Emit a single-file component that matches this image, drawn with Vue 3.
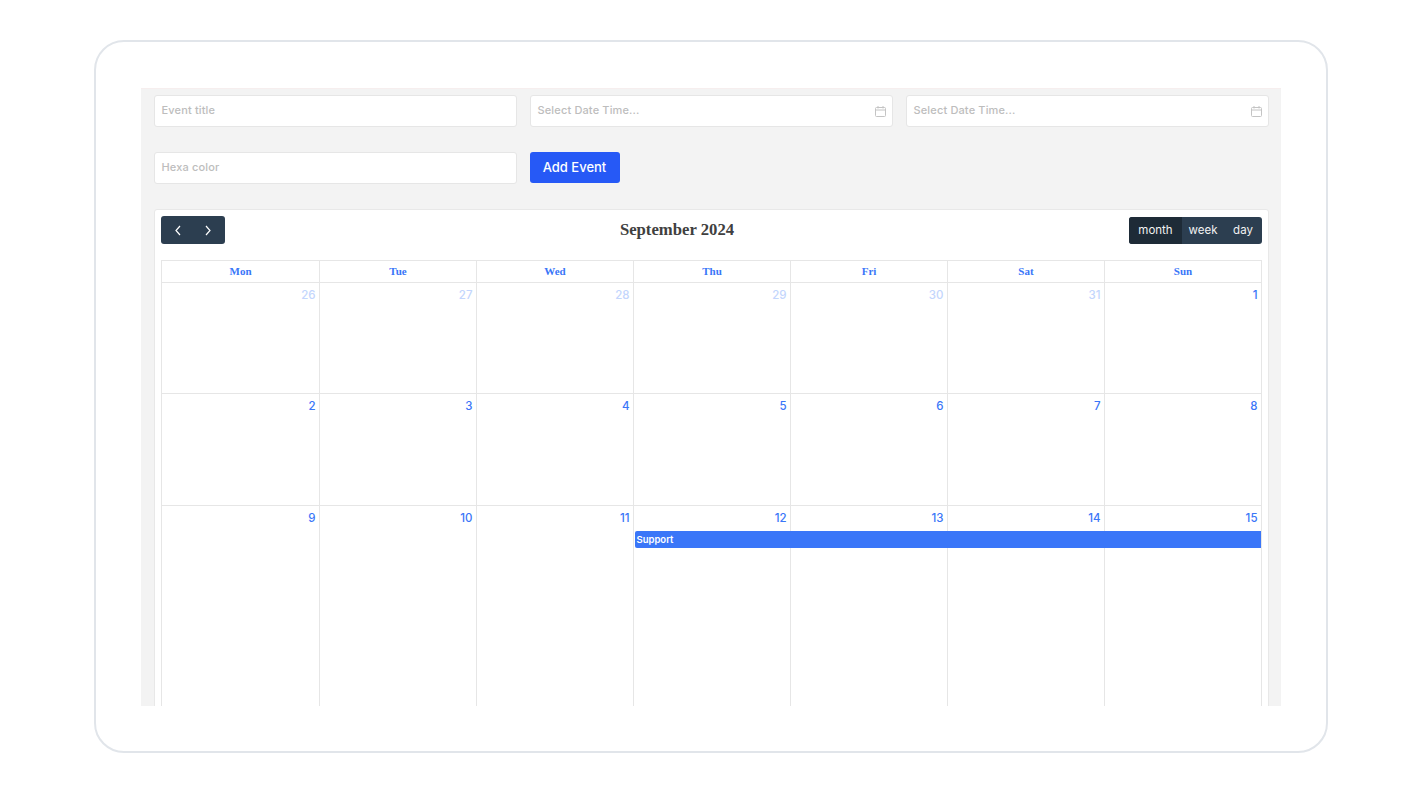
<template>
  <div class="page">
    <div class="frame">
      <div class="panel">
        <div class="fields">
          <div class="field"><span class="ph">Event title</span></div>
          <div class="field">
            <span class="ph">Select Date Time...</span>
            <svg class="cal-icon" width="11" height="11" viewBox="0 0 11 11" fill="none" stroke="#c4c4c4" stroke-width="1">
              <rect x="0.5" y="1.5" width="10" height="9" rx="1" />
              <path d="M0.5 4h10M3 0v2.5M8 0v2.5" />
            </svg>
          </div>
          <div class="field">
            <span class="ph">Select Date Time...</span>
            <svg class="cal-icon" width="11" height="11" viewBox="0 0 11 11" fill="none" stroke="#c4c4c4" stroke-width="1">
              <rect x="0.5" y="1.5" width="10" height="9" rx="1" />
              <path d="M0.5 4h10M3 0v2.5M8 0v2.5" />
            </svg>
          </div>
          <div class="field"><span class="ph">Hexa color</span></div>
          <div class="add-cell"><button class="add-btn">Add Event</button></div>
        </div>

        <div class="card">
          <div class="toolbar">
            <div class="nav">
              <button class="nav-btn">
                <svg width="8" height="11" viewBox="0 0 8 11" fill="none" stroke="#fff" stroke-width="1.2"><path d="M6 1L2 5.5L6 10" /></svg>
              </button>
              <button class="nav-btn">
                <svg width="8" height="11" viewBox="0 0 8 11" fill="none" stroke="#fff" stroke-width="1.2"><path d="M2 1L6 5.5L2 10" /></svg>
              </button>
            </div>
            <h2 class="title">September 2024</h2>
            <div class="views">
              <button class="view active">month</button>
              <button class="view week-btn">week</button>
              <button class="view">day</button>
            </div>
          </div>

          <div class="cal">
            <div class="head">
              <div v-for="d in days" :key="d" class="head-cell">{{ d }}</div>
            </div>
            <div v-for="(week, i) in weeks" :key="i" class="week">
              <div v-for="c in week" :key="c.n" class="day" :class="{ muted: c.muted }">{{ c.n }}</div>
              <div v-if="i === 2" class="event">Support</div>
            </div>
          </div>
        </div>
      </div>
    </div>
  </div>
</template>

<script setup>
const days = ['Mon', 'Tue', 'Wed', 'Thu', 'Fri', 'Sat', 'Sun']

const weeks = [
  [26, 27, 28, 29, 30, 31].map(n => ({ n, muted: true })).concat({ n: 1, muted: false }),
  [2, 3, 4, 5, 6, 7, 8].map(n => ({ n, muted: false })),
  [9, 10, 11, 12, 13, 14, 15].map(n => ({ n, muted: false })),
]
</script>

<style>
html, body {
  background: #fff;
  overflow: hidden;
}
</style>

<style scoped>
.page {
  height: 793px;
  padding: 40px 94px;
  box-sizing: border-box;
  font-family: Inter, "Open Sans", sans-serif;
}
.frame {
  height: 713px;
  box-sizing: border-box;
  border: 2px solid #e1e5ea;
  border-radius: 30px;
  padding: 46px 45px 45px 45px;
}
.panel {
  height: 618px;
  box-sizing: border-box;
  overflow: hidden;
  background: #f3f3f3;
  border-top: 1px solid #f6eeee;
  padding: 6px 12.5px 0 12.5px;
}
.fields {
  display: grid;
  grid-template-columns: repeat(3, 1fr);
  column-gap: 13px;
  row-gap: 25px;
  margin-bottom: 25px;
}
.field {
  height: 32px;
  box-sizing: border-box;
  background: #fff;
  border: 1px solid #e6e6e6;
  border-radius: 3px;
  padding: 0 6px 2px 7px;
  display: flex;
  align-items: center;
  justify-content: space-between;
}
.ph {
  font-size: 11px;
  font-weight: 500;
  letter-spacing: 0.15px;
  color: #bdbdbd;
}
.cal-icon {
  margin-top: 2px;
}
.add-btn {
  display: block;
  width: 90px;
  height: 31px;
  border: none;
  border-radius: 3px;
  background: #2659f6;
  color: #fff;
  font-family: inherit;
  font-size: 13px;
  font-weight: 500;
  padding: 0 0 2px;
}
.card {
  height: 520px;
  box-sizing: border-box;
  background: #fff;
  border: 1px solid #e8e8e8;
  border-radius: 3px 3px 0 0;
  padding: 6px 5.5px 0 6.5px;
}
.toolbar {
  display: flex;
  justify-content: space-between;
  align-items: center;
  height: 28px;
  margin-bottom: 16px;
}
.nav {
  display: flex;
  gap: 1px;
  width: 64px;
  height: 28px;
  padding: 0 2px;
  box-sizing: border-box;
  background: #2c3e50;
  border-radius: 3px;
}
.nav-btn {
  width: 30px;
  border: none;
  background: none;
  padding: 0;
  display: flex;
  align-items: center;
  justify-content: center;
}
.title {
  margin: 0;
  font-family: "Liberation Serif", serif;
  font-size: 16.7px;
  font-weight: 700;
  color: #404040;
}
.views {
  display: flex;
  height: 27px;
  border-radius: 3px;
  overflow: hidden;
  background: #2c3e50;
}
.view {
  border: none;
  background: none;
  color: #f2f2f2;
  font-family: inherit;
  font-size: 11.5px;
  padding: 0;
  width: 38px;
}
.view.week-btn {
  width: 42px;
}
.view.active {
  width: 53px;
  background: #1e2b37;
}
.cal {
  border-left: 1px solid #e6e6e6;
  border-right: 1px solid #e6e6e6;
  border-top: 1px solid #e6e6e6;
}
.head {
  display: grid;
  grid-template-columns: repeat(7, 1fr);
  height: 22px;
  border-bottom: 1px solid #e6e6e6;
  box-sizing: border-box;
}
.head-cell {
  text-align: center;
  font-family: "Liberation Serif", serif;
  font-size: 11px;
  font-weight: 700;
  line-height: 21px;
  color: #3a76f8;
  border-left: 1px solid #e6e6e6;
}
.head-cell:first-child,
.day:first-child {
  border-left: none;
}
.week {
  position: relative;
  display: grid;
  grid-template-columns: repeat(7, 1fr);
  height: 112px;
  box-sizing: border-box;
  border-bottom: 1px solid #e6e6e6;
}
.head + .week {
  height: 111px;
}
.week:last-child {
  height: 224px;
}
.day {
  border-left: 1px solid #e6e6e6;
  padding: 3.5px 3.5px 0 0;
  text-align: right;
  font-size: 11.5px;
  font-weight: 500;
  line-height: 16px;
  color: #3a76f8;
}
.day.muted {
  color: #c3d6fd;
}
.event {
  position: absolute;
  left: 473px;
  right: 0;
  top: 25px;
  height: 17px;
  box-sizing: border-box;
  background: #3a76f8;
  border-radius: 2px 0 0 2px;
  padding-left: 1.5px;
  color: #fff;
  font-size: 9.5px;
  font-weight: 600;
  line-height: 17px;
}
</style>
